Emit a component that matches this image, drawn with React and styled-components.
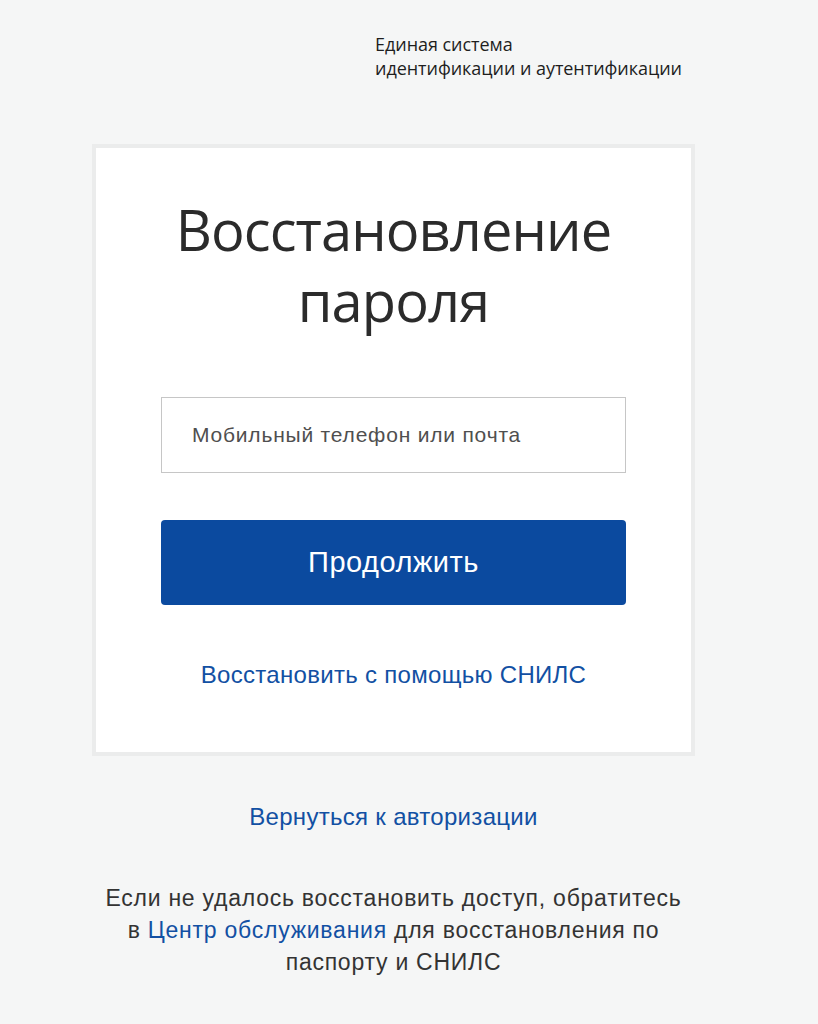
import React from "react";
import styled, { createGlobalStyle } from "styled-components";

const Global = createGlobalStyle`
  html, body {
    margin: 0;
    padding: 0;
    background: #f5f6f6;
  }
  body {
    font-family: "Liberation Sans", Arial, sans-serif;
    color: #333;
  }
`;

const Page = styled.div`
  width: 603px;
  margin-left: 92px;
  padding-top: 32px;
  padding-bottom: 40px;
  display: flex;
  flex-direction: column;
`;

const Header = styled.header`
  padding-left: 283px;
  height: 112px;
  box-sizing: border-box;
`;

const Tagline = styled.div`
  font-family: "Open Sans", "Noto Sans", sans-serif;
  font-size: 18px;
  line-height: 24px;
  color: #1e1e1e;
  letter-spacing: -0.05px;
`;

const Card = styled.section`
  background: #fff;
  border: 4px solid #ebecec;
  box-sizing: border-box;
  height: 612px;
  padding: 46px 65px 0;
  display: flex;
  flex-direction: column;
  align-items: center;
`;

const Title = styled.h1`
  margin: 0;
  font-family: "Open Sans", "Noto Sans", sans-serif;
  font-stretch: 89%;
  font-weight: 400;
  font-size: 56px;
  letter-spacing: -0.9px;
  line-height: 71px;
  color: #2b2b2b;
  text-align: center;
`;

const Input = styled.input`
  margin-top: 61px;
  width: 100%;
  height: 76px;
  box-sizing: border-box;
  border: 1px solid #c6c6c6;
  background: #fff;
  padding: 0 30px;
  font-family: "Liberation Sans", Arial, sans-serif;
  font-size: 21px;
  letter-spacing: 0.8px;
  color: #333;
  outline: none;
  &::placeholder {
    color: #4f4f4f;
  }
`;

const Button = styled.button`
  margin-top: 47px;
  width: 100%;
  height: 85px;
  border: none;
  border-radius: 4px;
  background: #0b4a9f;
  color: #fff;
  font-family: "Liberation Sans", Arial, sans-serif;
  font-size: 29px;
  letter-spacing: 0.5px;
  cursor: pointer;
`;

const Link = styled.a`
  color: #1250a3;
  text-decoration: none;
`;

const CardLink = styled.div`
  margin-top: 58px;
  line-height: 24px;
  text-align: center;
  font-size: 24px;
  letter-spacing: 0.3px;
`;

const BackRow = styled.div`
  margin-top: 49px;
  text-align: center;
  line-height: 24px;
  font-size: 24px;
  letter-spacing: 0.3px;
`;

const Note = styled.p`
  margin: 53px 0 0;
  font-family: "Liberation Sans", Arial, sans-serif;
  font-size: 23px;
  letter-spacing: 0.75px;
  line-height: 32px;
  color: #333;
  text-align: center;
`;

export default function App() {
  return (
    <>
      <Global />
      <Page>
        <Header>
          <Tagline>
            Единая система
            <br />
            идентификации и аутентификации
          </Tagline>
        </Header>
        <Card>
          <Title>
            Восстановление
            <br />
            пароля
          </Title>
          <Input placeholder="Мобильный телефон или почта" />
          <Button>Продолжить</Button>
          <CardLink>
            <Link href="#">Восстановить с помощью СНИЛС</Link>
          </CardLink>
        </Card>
        <BackRow>
          <Link href="#">Вернуться к авторизации</Link>
        </BackRow>
        <Note>
          Если не удалось восстановить доступ, обратитесь
          <br />в <Link href="#">Центр обслуживания</Link> для восстановления по
          <br />
          паспорту и СНИЛС
        </Note>
      </Page>
    </>
  );
}
